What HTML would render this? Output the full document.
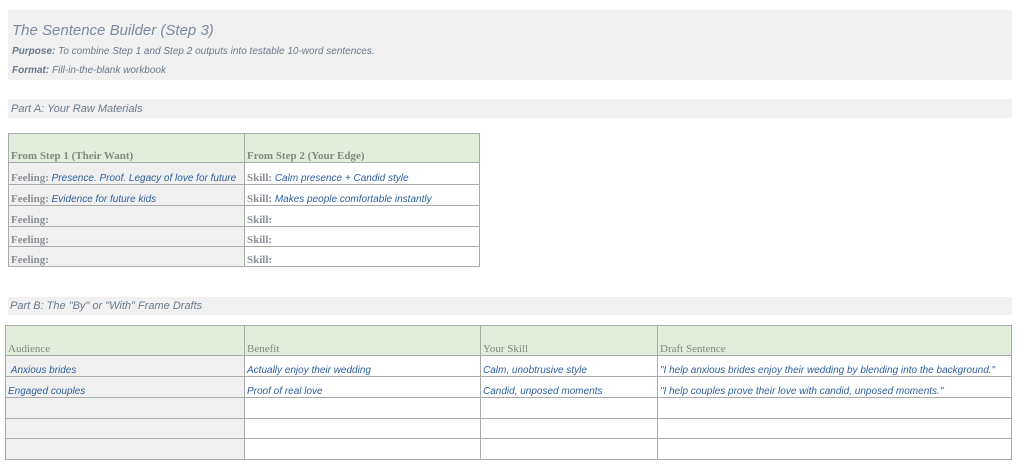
<!DOCTYPE html>
<html><head><style>
body{margin:0;width:1024px;height:472px;background:#fff;font-family:"Liberation Sans",sans-serif;position:relative;overflow:hidden}
.box{position:absolute;background:#f1f1f1}
.hw{font-style:italic;color:#6a7a8c}
table{position:absolute;border-collapse:collapse;border:1.5px solid #8a8f8a;table-layout:fixed}
td{border:1px solid #a8aca8;padding:0 2px;font-family:"Liberation Serif",serif;font-weight:bold;color:#8a8f96;font-size:11px;vertical-align:bottom;white-space:nowrap;overflow:hidden}
tr.h td{background:#e2eedb;color:#7d8a80}
td.g{background:#f0f0f0}
.v{font-family:"Liberation Sans",sans-serif;font-style:italic;font-weight:normal;color:#2f5f9a;font-size:10px}
</style></head><body>
<div class="box" style="left:8px;top:10px;width:1004px;height:70px"></div>
<div class="hw" style="position:absolute;left:12px;top:22px;font-size:15px;color:#7b8aa0">The Sentence Builder (Step 3)</div>
<div class="hw" style="position:absolute;left:12px;top:46px;font-size:10px"><b>Purpose:</b> To combine Step 1 and Step 2 outputs into testable 10-word sentences.</div>
<div class="hw" style="position:absolute;left:12px;top:65px;font-size:10px"><b>Format:</b> Fill-in-the-blank workbook</div>
<div class="box" style="left:8px;top:99px;width:1004px;height:19px"></div>
<div class="hw" style="position:absolute;left:11px;top:103px;font-size:11px">Part A: Your Raw Materials</div>
<table style="left:8px;top:133px;width:472px">
<colgroup><col style="width:236px"><col></colgroup>
<tr class="h" style="height:29px"><td>From Step 1 (Their Want)</td><td>From Step 2 (Your Edge)</td></tr>
<tr style="height:22px"><td class="g">Feeling: <span class="v">Presence. Proof. Legacy of love for future</span></td><td>Skill: <span class="v">Calm presence + Candid style</span></td></tr>
<tr style="height:21px"><td class="g">Feeling: <span class="v">Evidence for future kids</span></td><td>Skill: <span class="v">Makes people comfortable instantly</span></td></tr>
<tr style="height:21px"><td class="g">Feeling:</td><td>Skill:</td></tr>
<tr style="height:20px"><td class="g">Feeling:</td><td>Skill:</td></tr>
<tr style="height:20px"><td class="g">Feeling:</td><td>Skill:</td></tr>
</table>
<div class="box" style="left:8px;top:297px;width:1004px;height:18px"></div>
<div class="hw" style="position:absolute;left:10px;top:300px;font-size:11px">Part B: The "By" or "With" Frame Drafts</div>
<table style="left:5px;top:325px;width:1007px">
<colgroup><col style="width:239px"><col style="width:236px"><col style="width:177px"><col></colgroup>
<tr class="h" style="height:30px"><td style="font-weight:normal">Audience</td><td style="font-weight:normal">Benefit</td><td style="font-weight:normal">Your Skill</td><td style="font-weight:normal">Draft Sentence</td></tr>
<tr style="height:21px"><td class="g"><span class="v">&nbsp;Anxious brides</span></td><td><span class="v">Actually enjoy their wedding</span></td><td><span class="v">Calm, unobtrusive style</span></td><td><span class="v">"I help anxious brides enjoy their wedding by blending into the background."</span></td></tr>
<tr style="height:21px"><td class="g"><span class="v">Engaged couples</span></td><td><span class="v">Proof of real love</span></td><td><span class="v">Candid, unposed moments</span></td><td><span class="v">"I help couples prove their love with candid, unposed moments."</span></td></tr>
<tr style="height:21px"><td class="g"></td><td></td><td></td><td></td></tr>
<tr style="height:20px"><td class="g"></td><td></td><td></td><td></td></tr>
<tr style="height:21px"><td class="g"></td><td></td><td></td><td></td></tr>
</table>
</body></html>
